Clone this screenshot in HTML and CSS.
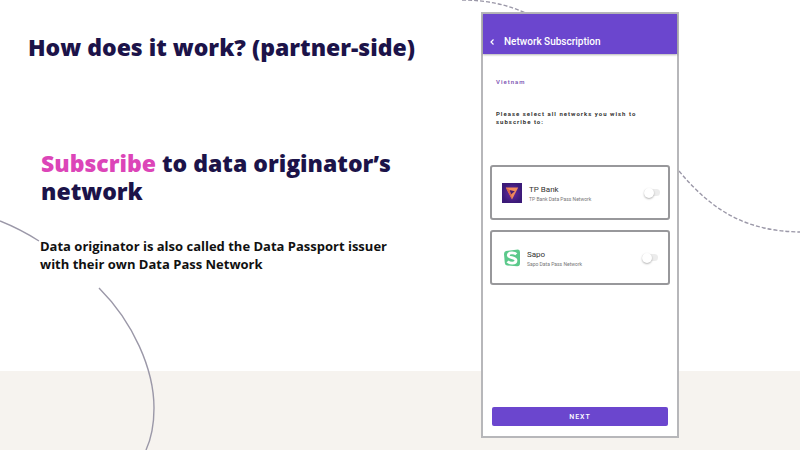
FILE: index.html
```html
<!DOCTYPE html>
<html lang="en">
<head>
  <meta charset="UTF-8">
  <meta name="viewport" content="width=device-width, initial-scale=1.0">
  <title>How does it work? (partner-side)</title>
  <link rel="stylesheet" href="styles.css">
</head>
<body>
  <main class="slide">
    <svg class="curves" viewBox="0 0 800 450" preserveAspectRatio="none" aria-hidden="true">
      <path d="M0 221Q20 229 39 241M99 288C133 322 154 369 154 408C154 425 151 439 146 450"/>
      <path class="dashed" d="M462 0C485 0 505 4 526 13M679 171C714 213 748 231 800 232"/>
    </svg>

    <section class="content">
      <h1>How does it work? (partner-side)</h1>
      <h2><span class="highlight">Subscribe</span> to data originator’s network</h2>
      <p>Data originator is also called the Data Passport issuer with their own Data Pass Network</p>
    </section>

    <form class="phone">
      <header class="phone-header">
        <button type="button" class="back-btn" aria-label="Back">
          <svg viewBox="0 0 6 8"><path d="M4.5 1.5L2 4L4.5 6.5"/></svg>
        </button>
        <span>Network Subscription</span>
      </header>
      <div class="phone-body">
        <div class="country">Vietnam</div>
        <p class="prompt">Please select all networks you wish to subscribe to:</p>

        <div class="network-list">
          <label class="network" for="tpbank">
            <svg class="logo" viewBox="0 0 20 20" aria-hidden="true">
              <defs>
                <radialGradient id="tpBg"><stop stop-color="#6a2aa0"/><stop offset="1" stop-color="#3b1a78"/></radialGradient>
              </defs>
              <rect width="20" height="20" fill="url(#tpBg)"/>
              <path d="M3.8 4.5H16.2L10 16.5Z" fill="#f08a5c"/>
              <path d="M7.5 7L12.8 8.3L9 11.5Z" fill="#4a1c70"/>
              <path d="M3.8 4.5L7.5 7L9 11.5L10 16.5Z" fill="#d9654a"/>
            </svg>
            <span class="network-text">
              <span class="network-name">TP Bank</span>
              <span class="network-desc">TP Bank Data Pass Network</span>
            </span>
            <input type="checkbox" id="tpbank" class="switch">
          </label>

          <label class="network network-small" for="sapo">
            <svg class="logo" viewBox="0 0 16 18" aria-hidden="true">
              <path d="M2 2L14 .5Q16 .5 16 3V14Q16 17.5 13 17.3L3 16.5Q1 16.2 .8 14L0 5Q0 2.5 2 2Z" fill="#5bc98b"/>
              <path d="M12.3 5.3C10.5 3.3 4.3 3 4.3 6.4C4.3 9.4 12 8 12 11.5C12 15 5.4 14.6 3.6 12.3" fill="none" stroke="#fff" stroke-width="2.8"/>
            </svg>
            <span class="network-text">
              <span class="network-name">Sapo</span>
              <span class="network-desc">Sapo Data Pass Network</span>
            </span>
            <input type="checkbox" id="sapo" class="switch">
          </label>
        </div>

        <button type="submit" class="next-btn">NEXT</button>
      </div>
    </form>
  </main>
</body>
</html>
```
FILE: styles.css
```css
* {
  box-sizing: border-box;
}
body {
  margin: 0;
  background-color: #fff;
  font-family: "Open Sans", sans-serif;
}
.slide {
  position: relative;
  display: flex;
  min-height: 100vh;
  padding: 12px 121px 12px 28px;
  background: linear-gradient(#f6f3ef, #f6f3ef) bottom / 100% 79px no-repeat;
}

/* background lines */
.curves {
  position: absolute;
  top: 0;
  left: 0;
  width: 100%;
  height: 100%;
  fill: none;
  stroke: #9b98a8;
  stroke-width: 1.4;
}
.dashed {
  stroke-dasharray: 4 2;
}

/* left side */
.content {
  position: relative;
  flex: 1;
  padding-top: 21px;
}
h1, h2 {
  margin: 0;
  color: #1c1349;
  font-size: 23px;
  font-weight: 800;
  line-height: 28px;
}
h2 {
  max-width: 390px;
  margin: 88px 0 0 13px;
}
.highlight {
  color: #dc45b8;
}
.content p {
  max-width: 356px;
  margin: 32px 0 0 12px;
  color: #111;
  font-size: 13px;
  font-weight: 700;
  line-height: 18px;
}

/* phone */
.phone {
  position: relative;
  display: flex;
  flex-direction: column;
  width: 198px;
  border: 2px solid #b7b7ba;
  background-color: #fff;
  font-family: Roboto, sans-serif;
}
.phone-header {
  display: flex;
  align-items: flex-end;
  gap: 8px;
  height: 40px;
  padding: 0 6px 6px;
  background-color: #6b46ce;
  box-shadow: 0 1px 2px rgba(0, 0, 0, 0.3);
  color: #fff;
  font-size: 10px;
  font-weight: 500;
  line-height: 12px;
}
.back-btn {
  display: flex;
  align-items: center;
  width: 7px;
  height: 12px;
  padding: 0;
  border: 0;
  background: none;
}
.back-btn svg {
  width: 6px;
  height: 8px;
  fill: none;
  stroke: #fff;
  stroke-width: 1.2;
}
.phone-body {
  display: flex;
  flex: 1;
  flex-direction: column;
  padding: 24px 7px 10px;
}
.country, .prompt {
  margin: 0 6px;
  font-size: 6px;
  line-height: 8px;
  letter-spacing: 1px;
}
.country {
  color: #7f58b5;
  font-weight: 600;
}
.prompt {
  margin-top: 24px;
  color: #333;
  font-weight: 700;
}
.network-list {
  display: flex;
  flex-direction: column;
  gap: 10px;
  margin-top: 39px;
}
.network {
  display: flex;
  align-items: center;
  height: 55px;
  padding: 0 8px 0 10px;
  border: 2px solid #98989b;
  border-radius: 3px;
}
.network-small {
  padding: 0 10px 0 12px;
}
.logo {
  flex: none;
  width: 20px;
  height: 20px;
}
.network-small .logo {
  width: 16px;
  height: 18px;
}
.network-text {
  display: flex;
  flex: 1;
  flex-direction: column;
  gap: 2px;
  margin-left: 7px;
  padding-top: 2px;
}
.network-name {
  color: #333;
  font-size: 8px;
  line-height: 9px;
}
.network-desc {
  color: #777;
  font-size: 5px;
  line-height: 6px;
}
.switch {
  display: flex;
  align-items: center;
  appearance: none;
  width: 16px;
  height: 7px;
  margin: 0;
  border-radius: 4px;
  background-color: #ececec;
}
.switch::before {
  content: "";
  flex: none;
  width: 10px;
  height: 10px;
  border-radius: 50%;
  background-color: #fff;
  box-shadow: 0 1px 2px rgba(0, 0, 0, 0.3);
}
.switch:checked::before {
  margin-left: auto;
  background-color: #6b46ce;
}
.next-btn {
  height: 19px;
  margin: auto 2px 0;
  padding: 0;
  border: 0;
  border-radius: 2px;
  background-color: #6b46ce;
  color: #fff;
  font-family: inherit;
  font-size: 7px;
  font-weight: 500;
  letter-spacing: 1px;
}
```
